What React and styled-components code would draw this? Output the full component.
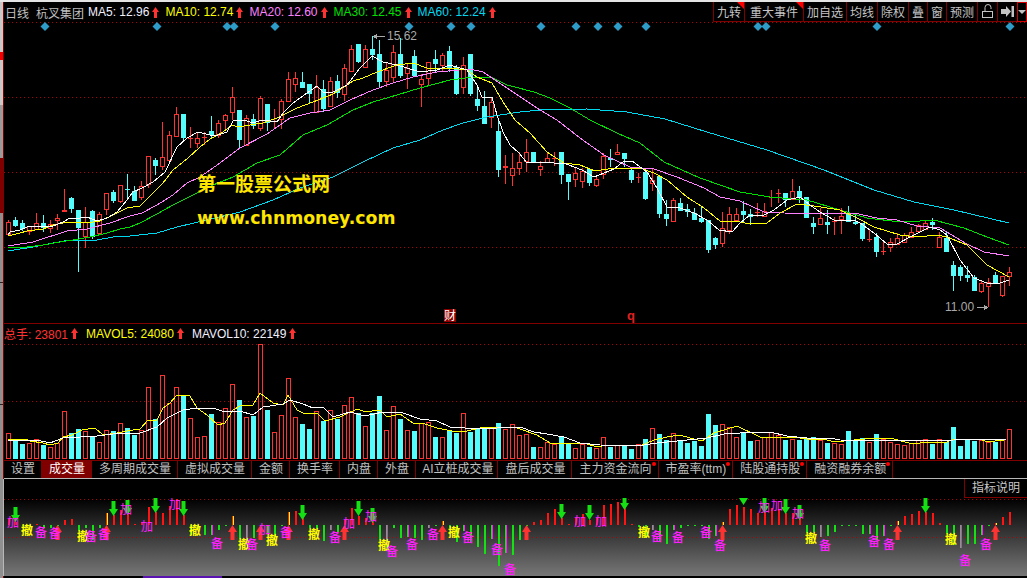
import React from "react";
import styled, { createGlobalStyle } from "styled-components";

const UI_FONT = `"Liberation Sans", "Noto Sans CJK SC", sans-serif`;
const RED = "#ff3232";
const CYAN = "#54fcfc";
const DARK_RED = "#800000";
const GRID = "#b00000";

// [isRed, high, bodyTop, bodyBottom, low], one per trading day, 7px apart
const candles = [
	[1,220,222,234,235],[0,217,220,225,227],[0,220,223,228,231],[1,226,226,231,235],[1,213,223,229,230],[0,215,223,227,232],
	[1,220,224,228,233],[1,214,218,220,230],[1,189,210,211,211],[0,197,198,208,213],[0,210,210,227,272],[1,207,222,236,248],
	[0,210,211,236,239],[1,212,214,233,233],[1,193,193,209,215],[0,190,192,200,203],[1,185,185,201,203],[0,174,189,189,200],
	[0,186,191,200,200],[1,181,186,197,200],[1,156,156,184,188],[0,158,160,165,175],[1,122,157,166,170],[1,131,135,160,160],
	[1,107,114,136,137],[0,114,114,137,140],[1,127,138,138,148],[1,132,138,143,148],[1,132,137,137,145],[0,116,131,134,138],
	[1,120,123,135,138],[1,114,115,120,130],[1,87,97,112,120],[0,110,110,139,149],[1,115,118,145,146],[0,114,119,125,129],
	[1,96,98,128,131],[0,104,104,122,131],[1,109,121,121,128],[1,99,101,119,129],[1,72,79,101,101],[1,72,78,84,92],
	[0,72,82,87,87],[0,84,84,93,103],[1,75,87,112,112],[0,80,89,108,112],[1,77,81,106,106],[0,75,81,92,98],
	[1,64,68,94,101],[1,45,49,71,71],[0,44,44,61,63],[1,45,49,67,67],[0,36,49,54,60],[0,40,54,81,88],
	[1,63,70,81,87],[1,45,52,77,83],[0,38,54,75,78],[1,64,68,73,89],[0,50,56,75,75],[1,74,79,84,107],
	[1,62,62,78,85],[0,50,59,63,72],[1,53,55,65,72],[0,46,51,68,72],[0,65,67,93,95],[1,57,65,87,94],
	[0,54,54,93,96],[0,88,99,105,111],[0,91,106,123,123],[1,97,102,117,128],[0,118,131,169,177],[1,155,166,167,184],
	[1,153,168,175,186],[1,152,162,168,175],[1,139,152,161,172],[0,152,152,162,162],[1,161,166,169,176],[1,153,158,162,163],
	[1,152,158,158,166],[0,152,152,174,184],[0,174,174,181,200],[1,168,173,179,187],[1,168,171,181,188],[0,169,169,182,186],
	[1,177,179,185,187],[1,153,156,174,179],[0,149,158,159,167],[1,144,152,154,155],[0,153,153,158,167],[0,167,170,179,183],
	[1,173,177,177,183],[0,170,172,198,200],[1,169,180,183,191],[0,176,176,213,218],[0,200,214,218,226],[1,198,200,221,221],
	[0,198,203,210,211],[0,204,209,211,217],[0,208,213,219,220],[0,206,218,221,223],[0,220,220,249,253],[0,237,238,244,249],
	[1,212,228,243,247],[1,207,214,230,234],[1,208,214,220,220],[0,201,211,214,222],[0,209,214,216,225],[1,203,212,212,217],
	[1,203,211,216,217],[1,190,197,197,207],[1,189,193,193,203],[0,193,193,199,207],[1,179,191,199,200],[0,186,191,197,203],
	[0,197,197,217,218],[0,217,223,226,234],[1,208,218,224,224],[0,210,222,224,234],[1,217,221,221,235],[1,208,216,219,234],
	[0,206,214,221,221],[0,215,222,223,225],[0,223,223,238,241],[1,230,239,239,242],[0,233,237,251,257],[1,242,251,251,255],
	[1,238,242,247,252],[1,233,238,244,244],[1,233,235,242,242],[1,227,232,237,238],[1,224,225,231,231],[1,221,223,229,230],
	[0,218,222,224,230],[1,232,237,247,247],[0,232,238,251,251],[0,261,265,275,291],[0,265,267,275,281],[0,266,275,277,282],
	[0,275,277,290,291],[1,280,283,291,293],[1,278,282,286,307],[0,272,275,283,283],[1,276,276,295,297],[1,267,272,276,286],
];

const maLines = [
	{ color: "#00d8f0", points: "8,251 33,247 53,243 70,240 97,240 113,237 130,236 157,233 177,227 207,220 240,212 273,200 300,188 333,177 363,162 393,148 420,140 443,130 463,123 487,117 520,112 540,110 587,109 627,112 665,119 707,132 767,150 824,170 874,190 914,202 954,210 1009,223" },
	{ color: "#00e000", points: "8,248 27,247 43,245 60,242 73,240 90,237 107,233 120,229 130,227 140,223 157,214 173,205 187,198 213,185 233,177 257,163 280,155 303,135 327,125 353,110 373,102 397,95 420,88 450,80 473,77 493,78 507,85 534,92 550,98 570,108 590,120 617,133 640,143 664,162 700,178 740,192 770,197 807,200 840,210 867,218 900,222 920,221 934,220 964,228 987,237 1009,245" },
	{ color: "#ff80ff", points: "8,246 33,242 67,231 87,229 110,223 130,216 142,213 157,205 173,195 187,183 200,177 220,163 240,148 267,134 290,118 310,113 330,110 350,100 373,90 393,83 413,77 437,72 470,69 483,72 507,88 540,110 557,120 580,138 604,155 630,167 654,169 677,177 704,188 720,197 740,201 764,212 784,213 840,214 854,213 877,218 897,220 917,226 940,228 967,244 984,252 1009,256" },
	{ color: "#ffff00", points: "8,236 20,233 27,231 43,229 53,225 63,223 73,222 93,222 100,221 113,215 127,208 140,206 148,198 163,183 173,170 188,158 200,147 210,139 223,132 232,125 238,127 250,125 263,123 277,118 297,108 313,102 333,94 347,85 353,81 363,78 377,72 397,65 413,63 427,68 450,68 467,70 477,77 492,83 503,102 515,120 530,133 547,152 564,163 580,165 595,171 614,168 640,168 654,173 667,180 687,197 704,208 720,221 740,222 750,224 767,223 780,213 797,204 814,206 840,210 857,218 874,227 900,235 917,237 937,235 947,237 967,245 987,265 1009,277" },
	{ color: "#ffffff", points: "8,235 10,232 20,230 27,227 43,226 53,226 63,222 70,218 80,218 87,217 97,221 107,218 117,212 127,200 133,192 142,188 153,182 165,172 177,147 187,138 198,132 210,135 218,135 227,132 233,121 245,120 252,123 263,120 277,122 283,113 293,103 300,98 317,86 323,92 333,92 347,85 360,68 372,56 383,62 397,65 407,68 420,72 437,70 450,65 467,70 477,85 482,97 492,97 497,115 503,132 510,145 519,153 527,163 540,162 554,163 564,163 574,167 582,170 594,177 604,173 614,169 624,161 632,161 647,172 657,188 667,207 680,208 694,213 707,220 719,230 732,232 740,223 750,215 764,215 774,210 787,200 800,197 810,205 820,212 834,220 854,220 860,223 874,233 887,244 897,244 910,237 930,227 940,230 947,235 960,260 974,278 987,283 1000,283 1009,280" },
];

const diamonds = [45, 157, 227, 234, 275, 409, 451, 471, 541, 576, 598, 618, 646, 758, 766, 877, 1010];

// bar tops read off the picture at 3x, negative means a cyan (falling) day
const volumes = [
	340,-360,-372,370,358,-375,382,368,274,-340,-327,334,-350,367,331,-333,310,-324,-345,330,
	202,-298,166,250,202,-225,295,352,349,-282,307,265,193,-240,292,-287,72,-270,337,286,
	175,292,-312,-327,274,-302,271,-297,256,232,-280,319,-280,-228,331,259,-297,331,-333,310,
	306,-351,352,-333,-338,280,-336,-328,-328,324,-309,326,313,345,343,-381,382,367,371,-351,
	-372,385,372,-381,385,352,-381,376,-376,-387,373,-357,325,-342,-360,340,-362,-369,-362,-378,
	-282,-315,313,320,352,-337,-363,361,350,336,346,-360,358,-360,-358,-351,361,-369,370,373,
	-333,-362,-354,367,-342,358,367,373,376,370,361,358,-372,358,-366,-321,-378,-360,-363,360,
	365,-366,360,328,
];

const mavol5 = "8,440 25,439 30,441 43,443 50,445 58,443 63,437 72,435 82,430 95,428 103,435 117,433 127,431 140,429 148,420 157,420 163,408 170,403 177,395 190,396 197,408 207,415 218,425 225,423 233,410 240,406 253,405 260,393 273,403 283,405 288,395 297,410 303,413 317,413 325,421 340,417 350,412 358,409 365,412 380,410 387,417 400,414 413,423 422,423 437,428 447,430 457,432 467,431 480,428 490,427 503,428 510,427 514,427 520,429 537,435 550,443 587,444 597,447 607,445 640,446 654,440 667,437 680,435 690,438 702,441 714,433 737,426 760,437 794,437 807,439 824,439 834,442 874,438 894,439 909,443 920,443 934,442 947,442 954,439 980,439 987,442 1004,440";
const mavol10 = "8,440 37,440 50,443 63,438 97,436 113,434 140,433 157,427 167,418 183,410 197,408 207,409 213,408 222,411 240,411 253,415 263,407 283,404 290,400 303,404 313,408 323,407 333,417 350,412 365,416 383,412 403,413 420,419 437,421 450,427 480,429 514,427 520,427 534,432 547,434 564,437 580,443 600,445 637,446 657,443 677,441 707,438 724,434 740,433 770,432 787,436 807,438 830,438 840,440 907,441 954,440 1007,439";

// indicator bar height at 3x, above (+) or below (-) the zero line
const bars = [
	18,8,-2,0,2,-10,-8,-4,15,18,-18,-10,-45,-8,35,30,45,32,2,8,
	55,40,35,57,78,30,-30,-12,-30,-30,-15,-2,28,-42,-45,-38,-4,-25,-35,-2,
	38,42,20,-10,-12,-48,-14,-20,15,50,28,20,10,-45,-70,-10,-40,-35,-38,-45,
	-8,-2,12,-10,-52,-18,-50,-65,-87,-42,-122,-85,-90,-45,-4,8,14,35,48,20,
	4,20,32,15,20,60,63,68,50,2,-5,-40,-14,-50,-58,-14,-8,-2,-3,-4,
	-42,-33,8,47,60,55,47,35,40,50,47,35,35,20,-25,-22,-35,-33,-22,-2,
	-3,-3,-28,-28,-45,-32,-4,12,26,32,42,38,35,5,-28,-60,-70,-58,-58,-30,
	-4,6,24,38,
];
const magentaBars = [29, 34, 46, 54, 57, 60, 65, 69, 71, 92, 95, 101, 116, 123, 125, 136, 139];
const yellowBars = [14, 32, 40, 62, 102, 127, 141];

const downArrows = [[1,507],[15,501],[17,500],[21,498],[25,501],[42,505],[50,501],[52,508],[79,504],[83,505],[88,495],[105,490],[108,498],[111,499],[113,505],[131,498]];
const upArrows = [7, 14, 32, 36, 40, 48, 62, 74, 102, 127, 141];

const addMarks = [[13,523],[126,510],[147,527],[175,505],[265,530],[349,524],[371,517],[580,522],[601,522],[764,508],[777,506],[798,514]];
const dropMarks = [[27,531],[83,537],[195,531],[244,545],[272,541],[314,535],[384,546],[454,533],[644,533],[811,539],[951,540]];
const spareMarks = [[41,533],[55,534],[91,537],[104,535],[217,544],[252,545],[286,533],[335,538],[392,552],[412,545],[433,535],[468,538],[497,550],[510,570],[657,537],[678,538],[706,533],[720,546],[825,546],[874,542],[889,545],[965,561],[986,545]];

const maLegend = [
	{ label: "MA5: 12.96", color: "#f0f0ff" },
	{ label: "MA10: 12.74", color: "#ffff00" },
	{ label: "MA20: 12.60", color: "#ff80ff" },
	{ label: "MA30: 12.45", color: "#00e000" },
	{ label: "MA60: 12.24", color: "#00d8f0" },
];

const tools = [
	{ label: "九转", flag: true },
	{ label: "重大事件", flag: true, pad: 5 },
	{ label: "加自选" },
	{ label: "均线" },
	{ label: "除权" },
	{ label: "叠" },
	{ label: "窗" },
	{ label: "预测" },
];

const tabs = [
	{ label: "设置" },
	{ label: "成交量", active: true },
	{ label: "多周期成交量" },
	{ label: "虚拟成交量" },
	{ label: "金额" },
	{ label: "换手率" },
	{ label: "内盘" },
	{ label: "外盘" },
	{ label: "AI立桩成交量", tight: true },
	{ label: "盘后成交量" },
	{ label: "主力资金流向", dot: true },
	{ label: "市盈率(ttm)", dot: true },
	{ label: "陆股通持股", dot: true },
	{ label: "融资融券余额", dot: true },
];

const dayX = (i) => 8.5 + 7 * i;

const GlobalStyle = createGlobalStyle`
	html, body {
		margin: 0;
		background: #000;
	}
`;

const Page = styled.div`
	display: flex;
	width: 1027px;
	height: 578px;
	overflow: hidden;
	background: #000;
	font-family: ${UI_FONT};
	font-size: 12px;
`;

const WindowEdge = styled.div`
	flex: 0 0 3px;
	background: linear-gradient(
		#c8c8c8 0 52px,
		#f00000 52px 60px,
		#c8c8c8 60px 105px,
		#9a9a9a 105px 158px,
		${DARK_RED} 158px 213px,
		#8f8f8f 213px 282px,
		#222 282px 283px,
		#8f8f8f 283px 404px,
		#222 404px 405px,
		#8f8f8f 405px
	);
`;

const Main = styled.div`
	flex: 1;
	display: flex;
	flex-direction: column;
	min-width: 0;
	border-left: 1px solid ${DARK_RED};
`;

const TopBar = styled.div`
	flex: 0 0 20px;
	display: flex;
	align-items: center;
	margin-left: -4px;
	padding-left: 5px;
	border-top: 2px solid #e4e4e4;
`;

const Caption = styled.span`
	color: #c0c0c0;
	margin-right: ${(p) => p.$gap}px;
	white-space: nowrap;
`;

const Legend = styled.span`
	display: flex;
	align-items: center;
	gap: 3px;
	margin-right: ${(p) => p.$gap}px;
	color: ${(p) => p.$color};
	white-space: nowrap;
`;

const Tools = styled.div`
	display: flex;
	align-self: stretch;
	margin-left: auto;
`;

const ToolButton = styled.div`
	position: relative;
	display: flex;
	align-items: center;
	justify-content: center;
	padding: 0 ${(p) => p.$pad || 3}px;
	min-width: ${(p) => p.$min || 0}px;
	box-sizing: border-box;
	border-left: 1px solid ${DARK_RED};
	border-bottom: 1px solid ${DARK_RED};
	color: #c4c4c4;
	white-space: nowrap;

	&::after {
		content: "";
		display: ${(p) => (p.$flag ? "block" : "none")};
		position: absolute;
		top: 0;
		right: 0;
		border-top: 7px solid #ff0000;
		border-left: 7px solid transparent;
	}
`;

const MenuButton = styled(ToolButton)`
	border: 1px solid #d00000;
	padding: 0;
`;

const PricePane = styled.div`
	position: relative;
	flex: 0 0 301px;
`;

const Chart = styled.svg`
	display: block;
	width: 100%;
	height: 100%;
`;

const Watermark = styled.div`
	position: absolute;
	left: 193px;
	top: 147px;
	color: #ffe600;
	font-weight: 700;
	font-family: "DejaVu Sans", "Noto Sans CJK SC", sans-serif;
`;

const WatermarkTitle = styled.div`
	font-size: 19px;
	line-height: 27px;
	font-family: "Noto Sans CJK SC", sans-serif;
`;

const WatermarkUrl = styled.div`
	margin-top: 12px;
	font-size: 17.3px;
	line-height: 20px;
`;

const VolumeHeader = styled.div`
	flex: 0 0 19px;
	display: flex;
	align-items: center;
	border-top: 1px solid ${DARK_RED};
`;

const VolumePane = styled.div`
	flex: 0 0 117px;
	height: 117px;
`;

const TabBar = styled.div`
	flex: 0 0 19px;
	display: flex;
	box-sizing: border-box;
	border-top: 1px solid ${DARK_RED};
	border-bottom: 1px solid #b8b8b8;
`;

const Tab = styled.div`
	position: relative;
	padding: ${(p) => (p.$tight ? "0 4px 0 6px" : "0 6px 0 7px")};
	line-height: 17px;
	color: ${(p) => (p.$active ? "#fff" : "#c0c0c0")};
	background: ${(p) => (p.$active ? DARK_RED : "transparent")};
	border-right: 1px solid ${DARK_RED};
	white-space: nowrap;

	&::after {
		content: "";
		display: ${(p) => (p.$dot ? "block" : "none")};
		position: absolute;
		top: 1px;
		right: 2px;
		width: 4px;
		height: 4px;
		border-radius: 50%;
		background: #ff0000;
	}
`;

const IndicatorPane = styled.div`
	position: relative;
	flex: 0 0 97px;
	height: 97px;
	margin-left: -1px;
	border-left: 1px solid #b8b8b8;
	background: linear-gradient(#000 0 19px, #777 100%);
`;

const InfoButton = styled.div`
	position: absolute;
	top: 0;
	right: 0;
	width: 62px;
	height: 18px;
	line-height: 18px;
	text-align: center;
	color: #c8c8c8;
	background: #000;
	border-left: 1px solid ${DARK_RED};
	border-bottom: 1px solid ${DARK_RED};
`;

const StatusEdge = styled.div`
	flex: 1;
	background: linear-gradient(
		90deg,
		#000 0 139px,
		#5a12b0 139px 218px,
		#000 218px
	);
`;

const Candle = ({ i, data }) => {
	const [isRed, high, top, bottom, low] = data;
	const x = dayX(i);
	const color = isRed ? RED : CYAN;
	const flat = bottom - top < 2;
	return (
		<g stroke={color} fill="none">
			{high < top && <line x1={x} x2={x} y1={high} y2={top} />}
			{low > bottom && <line x1={x} x2={x} y1={bottom} y2={low} />}
			{flat || !isRed ? (
				<rect x={x - 2.5} y={top} width={5} height={bottom - top + 1} fill={color} stroke="none" />
			) : (
				<rect x={x - 2} y={top + 0.5} width={4} height={bottom - top} />
			)}
		</g>
	);
};

const GridLine = ({ y }) => (
	<line x1="4" x2="1027" y1={y} y2={y} stroke={GRID} strokeDasharray="1 3" />
);

const SmallUpArrow = () => (
	<svg width="7" height="13" viewBox="0 0 7 13" aria-hidden="true">
		<path d="M3.5 1 L7 6 H5 V12 H2 V6 H0 Z" fill={RED} />
	</svg>
);

const PriceChart = () => (
	<Chart viewBox="4 22 1023 301" shapeRendering="crispEdges">
		{[22.5, 97.5, 172.5, 247.5].map((y) => (
			<GridLine key={y} y={y} />
		))}
		{diamonds.map((x) => (
			<path key={x} d={`M${x} 22 l4.5 4.5 l-4.5 4.5 l-4.5 -4.5 Z`} fill="#2d9cc8" shapeRendering="auto" />
		))}
		{candles.map((c, i) => (
			<Candle key={i} i={i} data={c} />
		))}
		{maLines.map((l) => (
			<polyline key={l.color} points={l.points} fill="none" stroke={l.color} />
		))}
		<g fill="#a8a8a8" fontSize="12" fontFamily={UI_FONT}>
			<text x="387" y="40">15.62</text>
			<path d="M373 36.5 l4 -3 v2.5 h8 v1 h-8 v2.5 Z" />
			<text x="945" y="311">11.00</text>
			<path d="M988 307.5 l-4 -3 v2.5 h-7 v1 h7 v2.5 Z" />
		</g>
		<rect x="444" y="309" width="12" height="13" fill="#8b0000" />
		<text x="444" y="320" fill="#fff" fontSize="12" fontFamily={UI_FONT}>财</text>
		<text x="627" y="320" fill="#e02020" fontSize="13" fontWeight="700" fontFamily={UI_FONT}>q</text>
	</Chart>
);

const VolumeChart = () => (
	<Chart viewBox="4 343 1023 117" shapeRendering="crispEdges">
		{[344.5, 401.5].map((y) => (
			<GridLine key={y} y={y} />
		))}
		{volumes.map((v, i) => {
			const top = Math.round(320 + Math.abs(v) / 3);
			const x = dayX(i);
			return v < 0 ? (
				<rect key={i} x={x - 2.5} y={top} width={5} height={459 - top} fill={CYAN} />
			) : (
				<rect key={i} x={x - 2} y={top + 0.5} width={4} height={458 - top} fill="none" stroke={RED} />
			);
		})}
		<polyline points={mavol5} fill="none" stroke="#ffff00" />
		<polyline points={mavol10} fill="none" stroke="#ffffff" />
	</Chart>
);

const IndicatorBar = ({ i, value }) => {
	const x = dayX(i) - 1;
	const h = Math.abs(value) / 3;
	const y = value > 0 ? 525 - h : 525;
	if (yellowBars.includes(i)) {
		return (
			<>
				<rect x={x} y={y} width={1} height={h} fill="#ff2020" />
				<rect x={x + 1} y={y} width={1} height={h} fill="#ffff00" />
			</>
		);
	}
	if (magentaBars.includes(i)) {
		return (
			<>
				<rect x={x} y={y} width={1} height={h} fill="#20e020" />
				<rect x={x + 1} y={y} width={1} height={h} fill="#ff20ff" />
			</>
		);
	}
	return <rect x={x} y={y} width={2} height={Math.max(h, 1)} fill={value > 0 ? "#ff1414" : "#14e014"} />;
};

const Mark = ({ at, color, weight, children }) => (
	<text x={at[0]} y={at[1] + 4} textAnchor="middle" fill={color} fontSize="12" fontWeight={weight} fontFamily={UI_FONT}>
		{children}
	</text>
);

const IndicatorChart = () => (
	<Chart viewBox="4 479 1023 97" shapeRendering="crispEdges">
		<defs>
			<clipPath id="signal-area">
				<rect x="4" y="498" width="1023" height="78" />
			</clipPath>
		</defs>
		{[499.5, 537.5].map((y) => (
			<GridLine key={y} y={y} />
		))}
		{bars.map((v, i) => (
			<IndicatorBar key={i} i={i} value={v} />
		))}
		<g clipPath="url(#signal-area)" shapeRendering="auto">
			{downArrows.map(([i, y]) => {
				const x = dayX(i);
				return (
					<path
						key={i}
						d={`M${x - 2} ${y} h4 v8 h2.5 l-4.5 7 l-4.5 -7 h2.5 Z`}
						fill="#14e014"
					/>
				);
			})}
			{upArrows.map((i) => {
				const x = dayX(i);
				return <path key={i} d={`M${x} 525 l4.5 7 h-2.5 v8 h-4 v-8 h-2.5 Z`} fill={RED} />;
			})}
		</g>
		<g shapeRendering="auto">
			{addMarks.map((at) => (
				<Mark key={at.join()} at={at} color="#ff20ff">加</Mark>
			))}
			{dropMarks.map((at) => (
				<Mark key={at.join()} at={at} color="#ffff00" weight="700">撤</Mark>
			))}
			{spareMarks.map((at) => (
				<Mark key={at.join()} at={at} color="#ff20ff" weight="500">备</Mark>
			))}
		</g>
	</Chart>
);

const App = () => (
	<>
		<GlobalStyle />
		<Page>
			<WindowEdge />
			<Main>
				<TopBar>
					<Caption $gap={7}>日线</Caption>
					<Caption $gap={4}>杭叉集团</Caption>
					{maLegend.map((m) => (
						<Legend key={m.label} $color={m.color} $gap={6}>
							{m.label}
							<SmallUpArrow />
						</Legend>
					))}
					<Tools>
						{tools.map((t) => (
							<ToolButton key={t.label} $flag={t.flag} $pad={t.pad}>
								{t.label}
							</ToolButton>
						))}
						<ToolButton $min={19}>
							<svg width="13" height="15" viewBox="0 0 13 15" aria-hidden="true">
								<path d="M4 7 V3.5 a3 3 0 0 1 6 0 V5" fill="none" stroke="#c4c4c4" />
								<rect x="1.5" y="7.5" width="10" height="6" fill="none" stroke="#c4c4c4" />
							</svg>
						</ToolButton>
						<ToolButton $min={19}>
							<svg width="13" height="11" viewBox="0 0 13 11" aria-hidden="true">
								<path d="M0 3 H5 V0 L10 5.5 L5 11 V8 H0 Z M10.5 0 H13 V11 H10.5 Z" fill="#c4c4c4" />
							</svg>
						</ToolButton>
						<MenuButton $min={10}>
							<svg width="8" height="4" viewBox="0 0 8 4" aria-hidden="true">
								<path d="M0 0 H8 L4 4 Z" fill="#c4c4c4" />
							</svg>
						</MenuButton>
					</Tools>
				</TopBar>
				<PricePane>
					<PriceChart />
					<Watermark>
						<WatermarkTitle>第一股票公式网</WatermarkTitle>
						<WatermarkUrl>www.chnmoney.com</WatermarkUrl>
					</Watermark>
				</PricePane>
				<VolumeHeader>
					<Legend $color={RED} $gap={8}>
						总手: 23801
						<SmallUpArrow />
					</Legend>
					<Legend $color="#ffff00" $gap={8}>
						MAVOL5: 24080
						<SmallUpArrow />
					</Legend>
					<Legend $color="#f0f0ff" $gap={0}>
						MAVOL10: 22149
						<SmallUpArrow />
					</Legend>
				</VolumeHeader>
				<VolumePane>
					<VolumeChart />
				</VolumePane>
				<TabBar>
					{tabs.map((t) => (
						<Tab key={t.label} $active={t.active} $dot={t.dot} $tight={t.tight}>
							{t.label}
						</Tab>
					))}
				</TabBar>
				<IndicatorPane>
					<IndicatorChart />
					<InfoButton>指标说明</InfoButton>
				</IndicatorPane>
				<StatusEdge />
			</Main>
		</Page>
	</>
);

export default App;
